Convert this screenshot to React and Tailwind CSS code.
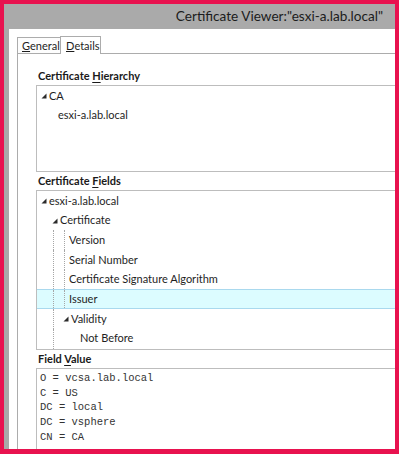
import React from "react";

const ui = { fontFamily: 'Lato, "Noto Sans", sans-serif' };
const mono = { fontFamily: '"Liberation Mono", "Courier New", monospace' };

const Tri = () => (
  <svg width="6" height="6" viewBox="0 0 6 6" className="shrink-0">
    <polygon points="5.5,0.5 5.5,5.5 0.5,5.5" fill="#2b2b2b" />
  </svg>
);

// decorative tree guide line inside a row
const Guide = ({ left }) => (
  <span
    className="absolute top-0 bottom-0 border-l border-dotted border-[#a6a6a6]"
    style={{ left }}
  />
);

const Row = ({ pad, tri, guides = [], selected, children }) => (
  <div
    className={[
      "relative flex items-center h-[19.7px] text-[11px] text-[#1e1e1e]",
      selected ? "bg-[#dcfcff] border-y border-[#a9d9ee]" : "",
    ].join(" ")}
    style={{ paddingLeft: pad }}
  >
    {guides.map((g) => (
      <Guide key={g} left={g} />
    ))}
    {tri && (
      <span className="mr-[2px]">
        <Tri />
      </span>
    )}
    <span>{children}</span>
  </div>
);

const Heading = ({ pre, u, post }) => (
  <div className="shrink-0 h-[18px] leading-[18px] pl-[2px] text-[11px] font-bold text-[#1a1a1a]">
    {pre}
    <span className="underline underline-offset-2">{u}</span>
    {post}
  </div>
);

export default function App() {
  return (
    <div
      className="w-[399px] h-[454px] bg-[#e8124f] pt-[4px] pl-[4px] pr-[4px] pb-[5px] flex flex-col overflow-hidden"
      style={ui}
    >
      {/* title bar */}
      <div className="h-[25px] bg-[#aaaaaa] flex items-center justify-end pr-[12px] text-[13.6px] text-[#1c1c1c] shrink-0">
        Certificate Viewer:"esxi-a.lab.local"
      </div>

      <div className="flex flex-1 min-h-0">
        <div className="w-[5px] bg-[#a9a9a9] shrink-0" />
        <div className="flex-1 bg-white pl-[8px] pt-[6px] flex flex-col min-w-0">
          {/* tabs */}
          <div className="flex items-end h-[18px] shrink-0 text-[11px] text-[#1e1e1e]">
            <div className="h-[16px] w-[43px] pl-[4px] border-t border-l border-[#acacac] bg-[#fdfdfd] flex items-center leading-none">
              <span className="underline underline-offset-1">G</span>eneral
            </div>
            <div className="h-[18px] w-[41px] pl-[5px] border-t border-l border-r border-[#acacac] bg-white flex items-center leading-none -mb-px relative">
              <span className="underline underline-offset-1">D</span>etails
            </div>
          </div>

          {/* tab panel */}
          <div className="flex-1 border-t border-l border-[#acacac] pl-[18px] pt-[13px] flex flex-col min-h-0">
            <Heading pre="Certificate " u="H" post="ierarchy" />
            <div className="h-[87px] border border-r-0 border-[#bdbdbd] shrink-0">
              <Row pad={4} tri>
                CA
              </Row>
              <Row pad={21}>esxi-a.lab.local</Row>
            </div>

            <Heading pre="Certificate " u="F" post="ields" />
            <div className="h-[160px] border border-r-0 border-[#bdbdbd] shrink-0 overflow-hidden">
              <Row pad={4} tri>
                esxi-a.lab.local
              </Row>
              <Row pad={15} tri>
                Certificate
              </Row>
              <Row pad={32} guides={[16, 27]}>
                Version
              </Row>
              <Row pad={32} guides={[16, 27]}>
                Serial Number
              </Row>
              <Row pad={32} guides={[16, 27]}>
                Certificate Signature Algorithm
              </Row>
              <Row pad={32} guides={[16, 27]} selected>
                Issuer
              </Row>
              <Row pad={26} tri guides={[16]}>
                Validity
              </Row>
              <Row pad={43} guides={[16]}>
                Not Before
              </Row>
            </div>

            <Heading pre="Field " u="V" post="alue" />
            <div
              className="flex-1 border-t border-l border-[#bdbdbd] pl-[3px] pt-[2px] text-[10.5px] leading-[14.7px] text-[#333]"
              style={mono}
            >
              <div>O = vcsa.lab.local</div>
              <div>C = US</div>
              <div>DC = local</div>
              <div>DC = vsphere</div>
              <div>CN = CA</div>
            </div>
          </div>
        </div>
      </div>
    </div>
  );
}
